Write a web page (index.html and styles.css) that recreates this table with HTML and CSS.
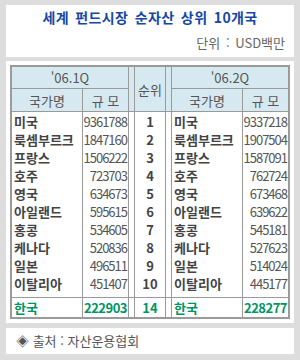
FILE: index.html
```html
<!DOCTYPE html>
<html lang="ko">
<head>
<meta charset="utf-8">
<link rel="stylesheet" href="styles.css">
</head>
<body>
<div class="page">
  <div class="panel head">
    <h1 class="title">세계 펀드시장 순자산 상위 10개국</h1>
    <div class="unit">단위 : USD백만</div>
  </div>
  <div class="panel main">
    <div class="grid">
      <div class="h q1">'06.1Q</div>
      <div class="h sp sp1"></div>
      <div class="h rank-h">순위</div>
      <div class="h sp sp2"></div>
      <div class="h q2">'06.2Q</div>
      <div class="h">국가명</div>
      <div class="h">규 모</div>
      <div class="h">국가명</div>
      <div class="h">규 모</div>

      <div class="body names">
        <span>미국</span><span>룩셈부르크</span><span>프랑스</span><span>호주</span><span>영국</span><span>아일랜드</span><span>홍콩</span><span>케나다</span><span>일본</span><span>이탈리아</span>
      </div>
      <div class="body nums">
        <span>9361788</span><span>1847160</span><span>1506222</span><span>723703</span><span>634673</span><span>595615</span><span>534605</span><span>520836</span><span>496511</span><span>451407</span>
      </div>
      <div class="body sp"></div>
      <div class="body ranks">
        <span>1</span><span>2</span><span>3</span><span>4</span><span>5</span><span>6</span><span>7</span><span>8</span><span>9</span><span>10</span>
      </div>
      <div class="body sp"></div>
      <div class="body names">
        <span>미국</span><span>룩셈부르크</span><span>프랑스</span><span>호주</span><span>영국</span><span>아일랜드</span><span>홍콩</span><span>케나다</span><span>일본</span><span>이탈리아</span>
      </div>
      <div class="body nums">
        <span>9337218</span><span>1907504</span><span>1587091</span><span>762724</span><span>673468</span><span>639622</span><span>545181</span><span>527623</span><span>514024</span><span>445177</span>
      </div>

      <div class="kr name">한국</div>
      <div class="kr num">222903</div>
      <div class="kr sp"></div>
      <div class="kr rank">14</div>
      <div class="kr sp"></div>
      <div class="kr name">한국</div>
      <div class="kr num">228277</div>
    </div>
  </div>
  <div class="panel foot">◈ 출처 : 자산운용협회</div>
</div>
</body>
</html>
```

FILE: styles.css
```css
html, body {
  margin: 0;
  padding: 0;
  background: #dddddd;
}
body {
  width: 300px;
  height: 360px;
  font-family: "Noto Sans CJK KR", "Noto Sans", sans-serif;
  color: #444;
}
.page {
  padding: 5px 6px 0 6px;
  display: flex;
  flex-direction: column;
}
.panel {
  background: #fff;
  width: 288px;
  box-sizing: border-box;
}
.head {
  height: 52px;
  padding: 3px 9px 0 0;
}
.title {
  margin: 0;
  font-size: 14px;
  line-height: 18px;
  font-weight: bold;
  color: #1547a6;
  text-align: center;
  letter-spacing: 0.4px;
  word-spacing: 2px;
  padding-left: 9px;
}
.unit {
  margin-top: 9px;
  text-align: right;
  font-size: 13px;
  line-height: 16px;
  word-spacing: 2px;
  color: #666;
}
.main {
  margin-top: 4px;
  padding: 4px;
}
.grid {
  display: grid;
  grid-template-columns: 70px 45px 5px 30px 5px 70px 45px;
  grid-template-rows: 21px 22px 185px 19px;
  gap: 1px;
  background: #9a9a9a;
  border: 2px solid #9a9a9a;
  width: 280px;
  box-sizing: border-box;
}
.h {
  background: #d6e9f1;
  display: flex;
  align-items: center;
  justify-content: center;
  font-size: 13px;
  color: #555;
}
.q1 { grid-column: 1 / 3; }
.sp1 { grid-column: 3; grid-row: 1 / 3; }
.rank-h { grid-column: 4; grid-row: 1 / 3; }
.sp2 { grid-column: 5; grid-row: 1 / 3; }
.q2 { grid-column: 6 / 8; }
.body {
  background: #fff;
  display: flex;
  flex-direction: column;
  padding-top: 1px;
}
.body span {
  height: 18px;
  line-height: 18px;
  white-space: nowrap;
}
.names {
  padding-left: 2px;
  font-size: 13px;
  font-weight: bold;
  color: #444;
}
.nums {
  text-align: right;
  padding-right: 1px;
  font-size: 13px;
  letter-spacing: -1px;
  color: #555;
}
.ranks {
  text-align: center;
  font-size: 13px;
  font-weight: bold;
  color: #444;
}
.kr {
  background: #fff;
  color: #009563;
  font-weight: bold;
  font-size: 13px;
  line-height: 19px;
  white-space: nowrap;
}
.kr.name { padding-left: 2px; }
.kr.num { text-align: right; padding-right: 1px; letter-spacing: -0.5px; }
.kr.rank { text-align: center; }
.foot {
  margin-top: 5px;
  height: 26px;
  padding-left: 10px;
  font-size: 13px;
  line-height: 26px;
  color: #555;
}
```
